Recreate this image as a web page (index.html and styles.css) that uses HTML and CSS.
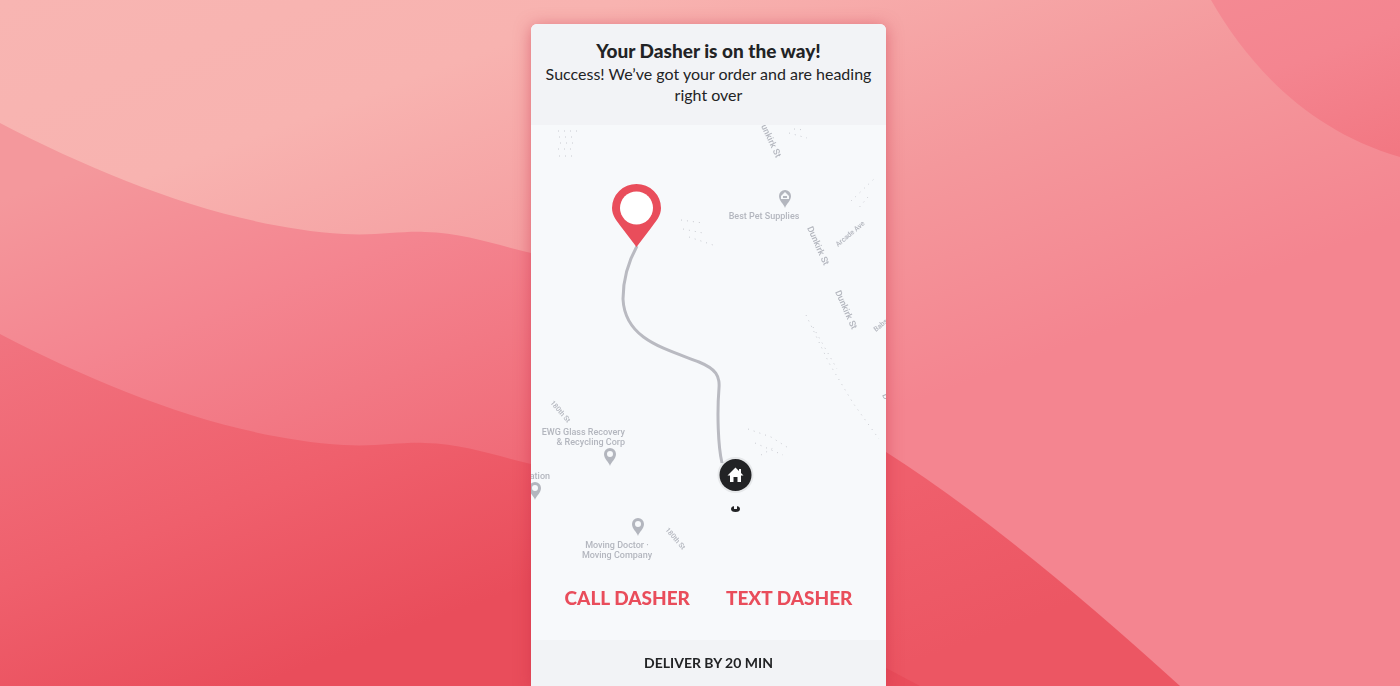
FILE: index.html
```html
<!DOCTYPE html>
<html lang="en">
<head>
<meta charset="utf-8">
<meta name="viewport" content="width=device-width, initial-scale=1">
<title>Your Dasher is on the way!</title>
<link rel="stylesheet" href="styles.css">
</head>
<body>
<svg class="backdrop" viewBox="0 0 1400 686" preserveAspectRatio="none" aria-hidden="true">
  <defs>
    <linearGradient id="sky" gradientUnits="userSpaceOnUse" x1="0" y1="0" x2="325" y2="880">
      <stop offset="0" stop-color="#f8b5b2"/><stop offset=".23" stop-color="#f8b3b0"/><stop offset=".51" stop-color="#f4989c"/><stop offset=".74" stop-color="#f48590"/>
    </linearGradient>
    <linearGradient id="mid" gradientUnits="userSpaceOnUse" x1="0" y1="0" x2="325" y2="880">
      <stop offset=".2" stop-color="#f4989c"/><stop offset=".39" stop-color="#f48590"/><stop offset=".65" stop-color="#f06b78"/>
    </linearGradient>
    <linearGradient id="low" gradientUnits="userSpaceOnUse" x1="0" y1="0" x2="325" y2="880">
      <stop offset=".33" stop-color="#f17480"/><stop offset=".59" stop-color="#ef5f6c"/><stop offset=".78" stop-color="#e94d5b"/>
    </linearGradient>
    <linearGradient id="wedge" gradientUnits="userSpaceOnUse" x1="0" y1="0" x2="325" y2="880">
      <stop offset=".82" stop-color="#ef5f6c"/><stop offset="1" stop-color="#ec5663"/>
    </linearGradient>
    <linearGradient id="corner" gradientUnits="userSpaceOnUse" x1="0" y1="0" x2="325" y2="880">
      <stop offset=".43" stop-color="#f48a93"/><stop offset=".54" stop-color="#f48590"/><stop offset=".68" stop-color="#f27681"/>
    </linearGradient>
  </defs>
  <rect width="1400" height="686" fill="url(#sky)"/>
  <path fill="url(#corner)" d="M1211 0C1250 68 1310 131 1400 157V0Z"/>
  <path fill="url(#mid)" d="M0 123C110 180 230 227 344 234C375 236 400 231 425 232C465 233 500 246 531 253L700 310V686H0Z"/>
  <path fill="url(#wedge)" d="M700 350L886 452Q1010 531 1180 686H700Z"/>
  <path fill="#e94d5b" d="M700 640L886 668L920 686H700Z"/>
  <path fill="url(#low)" d="M0 334C110 391 230 438 344 445C375 447 400 442 425 443C465 444 500 457 531 464L700 520V686H0Z"/>
</svg>

<main class="card">
  <header class="status">
    <h1 class="status-title">Your Dasher is on the way!</h1>
    <p class="status-text">Success! We’ve got your order and are heading right over</p>
  </header>

  <svg class="map" viewBox="0 0 355 440" role="img" aria-label="Map of the Dasher's route to your home">
    <defs>
      <path id="place" fill="#b3b6be" fill-rule="evenodd" d="M0 9C-1 5-6 2-6-3A6 6 0 0 1 6-3C6 2 1 5 0 9ZM0-6A3 3 0 1 0 0 0A3 3 0 1 0 0-6Z"/>
    </defs>
    <g class="terrain">
      <path d="M27 6H46M28 12H46M29 18H45M27 24H43M28 31H42"/>
      <path d="M150 95L172 98M152 104L172 108M158 112L182 120"/>
      <path d="M258 8L276 13M263 4L274 5"/>
      <path d="M320 76L345 52M337 72L326 85"/>
      <path d="M275 190L298 238L322 278L348 314M282 202L306 244"/>
      <path d="M217 304L240 312L259 324M224 318L252 330M230 330L244 322"/>
    </g>
    <g class="place-names">
      <text x="233" y="94" text-anchor="middle">Best Pet Supplies</text>
      <text x="94" y="310" text-anchor="end">EWG Glass Recovery</text>
      <text x="94" y="320" text-anchor="end">&amp; Recycling Corp</text>
      <text x="19" y="354" text-anchor="end">ation</text>
      <text x="86" y="423" text-anchor="middle">Moving Doctor ·</text>
      <text x="86" y="433" text-anchor="middle">Moving Company</text>
    </g>
    <g class="street-names">
      <text transform="translate(230 1) rotate(65)">unkirk St</text>
      <text transform="translate(276 103) rotate(66)">Dunkirk St</text>
      <text transform="translate(304 167) rotate(66)">Dunkirk St</text>
      <text transform="translate(351 270) rotate(66)">D</text>
    </g>
    <g class="lane-names">
      <text transform="translate(307 122) rotate(-40)">Arcade Ave</text>
      <text transform="translate(345 207) rotate(-40)">Babs</text>
      <text transform="translate(19 278) rotate(49)">180th St</text>
      <text transform="translate(134 405) rotate(49)">180th St</text>
    </g>
    <path fill="#b3b6be" fill-rule="evenodd" d="M254 83C253 79 248 76 248 71A6 6 0 0 1 260 71C260 76 255 79 254 83ZM254 67L250 71V74H258V71ZM252 71H256V73H252Z"/>
    <use href="#place" x="79" y="332"/>
    <use href="#place" x="4" y="366"/>
    <use href="#place" x="107" y="402"/>

    <path class="route" d="M106 121C96 139 92 158 92 174C94 214 132 223 168 237C185 244 189 251 188 263C186 288 187 321 191 338"/>
    <path fill="#e94d5b" d="M105.500 122L91 103C86 96 81 91 81 83A24.500 24 0 0 1 130 83C130 91 125 96 120 103Z"/>
    <circle cx="105.500" cy="83" r="16.500" fill="#fff"/>

    <circle cx="204.500" cy="350" r="18" fill="#22242a" opacity=".08"/>
    <circle cx="204.500" cy="350" r="16" fill="#222325"/>
    <path fill="#fff" d="M204.500 342.500L196.500 350.500H199V357H202.500V352H206.500V357H210V350.500H212.500L210 348V344H208V346Z"/>
    <ellipse cx="204.500" cy="384" rx="4.500" ry="3" fill="#222325"/>
    <path fill="#f7f8fb" d="M203 380H206V384H203Z"/>
  </svg>

  <div class="actions">
    <button class="action" type="button">CALL DASHER</button>
    <button class="action" type="button">TEXT DASHER</button>
  </div>

  <footer class="eta">DELIVER BY 20 MIN</footer>
</main>
</body>
</html>
```
FILE: styles.css
```css
* {
  box-sizing: border-box;
}

body {
  margin: 0;
  min-height: 100vh;
  padding: 24px 0 0 17px;
  display: flex;
  justify-content: center;
  background: #f48590;
  color: #222325;
  font-family: Lato, "Open Sans", sans-serif;
}

.backdrop {
  position: fixed;
  inset: 0;
  z-index: -1;
  width: 100%;
  height: 100%;
}

.card {
  width: 100%;
  max-width: 355px;
  display: flex;
  flex-direction: column;
  overflow: hidden;
  border-radius: 6px 6px 0 0;
  background: #f7f9fb;
  box-shadow: 0 2px 16px rgba(200, 45, 70, 0.5);
}

.status {
  padding: 14px 12px 20px;
  background: #f2f3f6;
  text-align: center;
}

.status-title {
  margin: 0;
  font-size: 19px;
  line-height: 25px;
  font-weight: 900;
}

.status-text {
  margin: 0;
  font-size: 16px;
  line-height: 21px;
}

.map {
  display: block;
  width: 100%;
}

.place-names,
.street-names,
.lane-names {
  fill: #b3b6be;
  font-family: Roboto, sans-serif;
  font-size: 9px;
  font-weight: 500;
}

.lane-names {
  font-size: 7px;
}

.terrain {
  fill: none;
  stroke: #c8cad0;
  stroke-dasharray: 1 5;
}

.route {
  fill: none;
  stroke: #b9bac1;
  stroke-width: 3;
}

.actions {
  flex: 1;
  display: flex;
  justify-content: center;
  align-items: center;
  gap: 36px;
  padding-bottom: 10px;
}

.action {
  padding: 0;
  border: 0;
  background: none;
  color: #e94d5b;
  font: 900 19px/24px Lato, "Open Sans", sans-serif;
  cursor: pointer;
}

.eta {
  padding: 12px;
  background: #f2f3f6;
  font-size: 14px;
  line-height: 22px;
  font-weight: 700;
  text-align: center;
}
```
